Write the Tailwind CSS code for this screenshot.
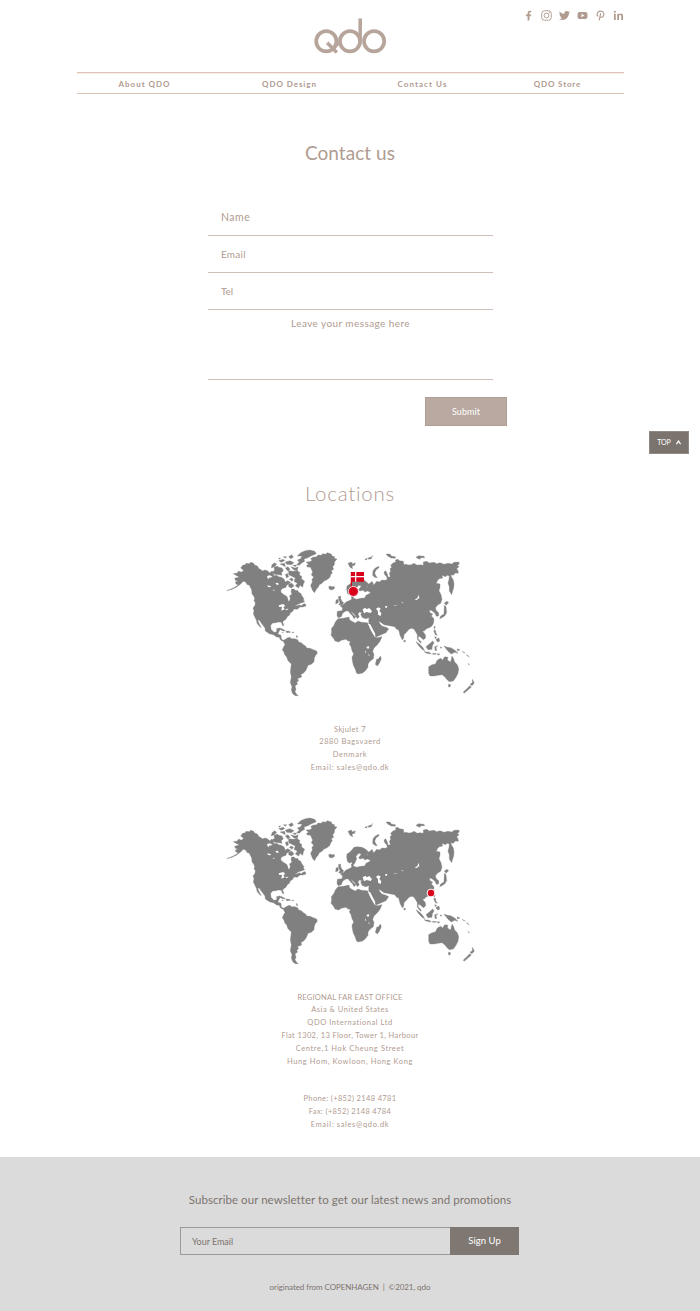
<!DOCTYPE html>
<html lang="en">
<head>
<meta charset="utf-8">
<meta name="viewport" content="width=device-width, initial-scale=1">
<title>QDO – Contact us</title>
<script src="https://cdn.jsdelivr.net/npm/@tailwindcss/browser@4"></script>
</head>
<body class="relative h-[1311px] w-[700px] overflow-x-hidden bg-white font-['Lato',sans-serif] text-[#b09b91]">

<!-- Shared world map, drawn at three units per pixel -->
<svg class="hidden" xmlns="http://www.w3.org/2000/svg">
  <symbol id="world" viewBox="0 0 780 480">
    <g fill="#808080" stroke="#808080" stroke-width="1" stroke-linejoin="round">
      <!-- North America -->
      <path d="M45,104L40,101L52,99L56,93L64,97L71,91L66,87L62,84L68,76L76,74L78,70L88,71L92,67L100,69L104,75L112,78L117,86L121,88L128,93L134,90L142,92L150,99L155,93L160,100L162,107L170,106L176,110L184,112L192,117L196,126L203,122L212,127L206,132L200,136L198,142L186,146L182,152L184,158L192,164L200,169L203,175L205,184L209,182L211,174L208,168L216,162L213,155L215,147L222,147L228,152L232,150L236,157L242,160L246,168L252,176L250,180L254,185L244,189L236,191L224,199L231,197L240,194L243,198L250,192L256,191L258,198L248,201L240,201L232,208L222,207L218,214L210,220L209,225L202,230L198,238L190,243L188,247L192,256L188,257L184,247L174,246L168,248L158,249L152,256L153,268L162,277L169,276L171,270L180,269L175,278L174,283L183,286L184,297L190,301L198,298L196,303L186,303L180,298L178,292L170,291L160,284L148,281L136,273L135,264L126,252L118,241L113,240L118,253L124,263L118,259L111,250L110,243L106,234L100,222L102,212L99,204L105,196L106,188L102,182L104,176L101,168L96,162L95,150L88,136L80,133L78,127L70,124L62,132L50,141L36,148L20,152L40,144L55,135L48,132L46,126L54,123L46,121L44,115L58,111L52,108z"/>
      <!-- Arctic archipelago -->
      <path d="M232,48L242,38L256,32L270,30L284,34L289,41L280,45L273,48L262,54L252,57L254,64L244,70L238,76L230,74L238,66L232,60L242,56L246,48z"/>
      <path d="M162,82L172,78L176,82L186,84L190,92L184,98L186,106L176,104L164,103L156,96L164,91z"/>
      <path d="M156,74L164,68L170,73L163,80L154,84zM176,62L190,58L194,62L184,67zM180,72L194,70L196,80L188,76zM196,66L210,62L222,68L214,74L200,73zM206,50L216,44L220,52L212,56zM190,50L200,50L196,55zM196,84L204,80L210,88L204,94zM212,80L226,84L234,80L232,92L222,90zM176,54L182,54L178,58zM218,76L230,75L226,80z"/>
      <path d="M206,92L220,94L232,92L240,98L238,104L246,110L244,116L254,124L250,132L248,142L240,136L236,144L226,138L232,130L222,124L226,114L214,108L206,104zM196,104L202,100L206,110L200,114zM206,132L216,130L222,138L214,144L206,140zM214,114L220,118L216,124L208,118z"/>
      <!-- Greenland and Iceland -->
      <path d="M258,66L270,65L276,61L272,56L278,52L290,50L294,45L304,46L308,41L316,43L322,38L334,42L336,48L344,50L342,55L351,57L344,65L343,74L338,80L341,88L334,92L337,99L332,104L330,112L320,120L312,123L306,130L298,134L295,141L288,149L284,158L278,152L275,145L272,136L277,126L276,118L281,112L274,104L278,96L274,88L272,82L262,81L260,76L266,73z"/>
      <path d="M326,140L332,138L336,141L342,139L344,145L336,150L328,148z"/>
      <!-- Caribbean -->
      <path d="M168,267L178,264L186,266L196,272L190,273L182,269L172,270zM198,273L208,274L212,277L200,278zM186,277L190,277L188,279zM216,276L222,277L218,279zM230,286L233,290L231,294L229,289z"/>
      <!-- South America -->
      <path d="M190,304L198,296L204,293L210,292L214,296L224,296L233,299L236,306L244,308L250,314L257,318L260,324L270,325L280,329L290,333L292,340L287,346L283,354L282,365L274,373L264,376L261,384L257,392L250,400L243,403L245,411L232,416L236,421L230,428L233,432L225,438L228,447L225,455L230,463L235,467L226,467L218,461L214,450L216,440L211,428L214,410L211,396L214,372L204,362L200,351L194,344L192,337L187,329L191,320L195,314z"/>
    </g>
    <g fill="#808080" stroke="#808080" stroke-width="1" stroke-linejoin="round" transform="translate(360 0)">
      <!-- Europe and Asia -->
      <path d="M-8,214L6,212L8,204L0,197L10,194L18,186L30,181L35,178L34,168L39,166L40,174L50,178L62,175L74,174L78,166L86,162L92,157L82,153L74,156L70,150L76,144L84,140L80,134L90,130L96,124L100,132L94,136L104,132L110,124L118,126L126,120L136,121L142,118L140,110L134,104L132,96L137,92L141,100L145,112L151,110L148,100L152,94L150,86L155,82L152,76L160,68L168,66L166,60L174,58L178,62L190,64L192,74L198,73L206,75L214,74L222,70L232,76L240,74L250,76L250,66L260,64L268,69L282,67L290,71L300,68L312,73L324,70L336,72L342,67L356,66L358,72L352,76L357,80L350,86L354,92L355,100L346,99L340,106L333,104L334,110L340,120L342,132L341,144L337,156L335,164L328,153L328,140L324,130L327,118L328,108L322,106L316,110L306,106L308,114L298,116L292,122L289,130L300,132L300,142L297,152L303,164L306,178L302,190L292,196L286,204L289,212L296,218L296,228L289,229L285,220L276,212L268,210L270,218L278,222L274,228L282,236L281,248L276,258L268,263L258,266L254,272L248,274L256,284L257,294L250,299L242,292L236,288L234,296L244,306L242,310L232,298L232,284L226,274L222,268L216,265L208,267L200,276L192,284L191,294L187,300L180,286L176,270L170,268L164,260L148,257L132,254L124,248L116,243L120,252L126,258L132,260L138,262L146,266L138,278L124,284L108,291L103,281L95,268L87,254L86,240L88,233L76,236L66,232L62,222L66,218L58,216L54,222L58,230L52,236L46,226L38,218L32,214L40,224L48,230L42,236L38,228L30,220L24,212L16,214L8,220L4,230L-6,233L-9,226z"/>
      <!-- Scandinavia -->
      <path d="M20,147L21,138L30,132L36,125L42,118L52,116L66,118L75,122L84,130L82,140L72,150L60,153L56,149L64,138L56,136L48,145L50,152L45,164L40,171L35,163L28,165L22,160z"/>
      <!-- British Isles -->
      <path d="M-5,170L2,168L2,176L6,184L11,188L8,194L-4,195L0,188L-3,180zM-12,180L-5,178L-5,188L-13,192z"/>
      <!-- Africa -->
      <path d="M-6,236L10,235L27,231L29,240L38,245L46,249L54,243L64,247L82,248L86,254L90,266L98,280L105,291L112,293L126,290L120,304L112,314L102,324L98,334L102,344L100,356L90,364L84,372L84,382L76,392L68,399L54,402L49,398L46,388L40,376L37,362L36,352L41,342L36,332L33,320L28,312L31,304L24,303L18,298L4,301L-4,306L-15,303L-20,294L-27,286L-25,276L-26,266L-18,256L-14,246z"/>
      <path d="M121,348L124,356L118,370L112,378L106,373L110,358L116,356z"/>
      <!-- Arctic islands -->
      <path d="M24,70L34,66L38,72L46,68L44,76L36,78L38,86L30,82zM74,58L82,55L80,60zM84,54L96,50L98,46L94,56L86,58zM98,106L99,92L106,84L116,79L117,83L108,90L104,100L108,108L112,113L104,112zM138,42L150,42L154,48L166,50L166,55L154,54L144,49zM228,52L236,47L252,49L254,53L242,53L240,58L232,55z"/>
      <!-- Japan, Sakhalin -->
      <path d="M313,189L321,184L326,188L318,196zM313,196L318,200L320,218L314,228L304,234L299,236L302,228L312,222zM330,112L334,120L334,134L331,128z"/>
      <!-- Southeast Asia and Pacific -->
      <path d="M192,300L197,302L195,307L191,304zM228,305L238,312L248,322L254,332L246,328L236,317zM252,335L268,337L274,342L260,340zM278,340L290,341L288,343L278,343zM292,341L300,342L294,346zM258,320L268,312L278,303L282,308L277,317L276,328L264,329zM284,320L294,317L288,322L290,332L285,331zM282,259L286,260L283,268zM281,272L286,270L288,280L292,286L286,284zM288,298L297,294L299,304L292,306zM284,290L290,292L286,296zM301,320L306,323L302,325zM312,318L322,322L332,323L344,330L354,340L344,337L334,342L324,334zM352,326L360,330L352,333zM366,334L376,339L370,337zM380,344L388,350L382,348zM384,370L389,375L385,373zM256,264L262,262L258,268z"/>
      <!-- Australia, Tasmania, New Zealand -->
      <path d="M266,380L276,374L286,372L292,360L302,355L308,360L314,350L324,352L322,360L332,366L336,348L341,356L344,366L352,374L356,386L354,400L348,412L340,423L328,425L320,418L314,410L306,404L294,406L282,408L270,408L266,400zM325,433L332,434L330,441L326,441zM397,418L403,429L396,437L390,433L397,428zM389,437L394,441L384,450L372,460L370,456L380,447z"/>
    </g>
    <!-- Lakes and inland seas -->
    <g fill="#fff">
      <path d="M141,108L150,106L158,111L148,113L144,118zM142,136L154,139L150,142L144,141zM166,130L174,128L176,134L170,134zM158,150L164,149L162,153zM176,196L190,192L196,198L190,201L194,208L184,212L186,200L178,201zM196,207L206,206L200,211z"/>
      <g transform="translate(360 0)">
        <path d="M68,208L76,203L80,208L88,204L96,214L92,219L80,216L72,220zM108,206L116,202L122,206L118,212L124,220L122,228L114,224L114,214zM136,198L142,198L140,204L136,203zM160,198L174,194L166,198zM184,188L190,186L188,190zM224,180L232,174L236,164L238,174L230,180zM80,320L88,319L86,326L80,325zM76,330L79,338L76,338zM86,340L89,348L86,347z"/>
        <path d="M84,252L90,252L106,282L104,290L96,276z"/>
      </g>
    </g>
  </symbol>
</svg>

<header class="mx-auto w-[547px]">
  <div class="grid h-[72px] grid-cols-[1fr_76px_1fr]">
    <span></span>
    <svg class="mt-[17px] h-[40px] w-[76px]" viewBox="0 0 76 40" fill="none" stroke="#b7a59b" stroke-width="3.7" role="img" aria-label="qdo">
      <circle cx="14.3" cy="24.3" r="10.1"/><circle cx="38" cy="24.3" r="10.1"/><circle cx="62.1" cy="24.3" r="10.1"/>
      <path d="M15.2 25.8L24.8 35.4M26.5 26L20 32.5M48.2 1.5V25" stroke-width="3.5"/>
    </svg>
    <div class="flex h-[30px] items-center justify-end gap-[7px] text-[#b09b91]">
      <svg class="size-[11px]" viewBox="0 0 12 12" fill="currentColor"><path d="M5 11.5V6.8H3.2V4.9H5V3.4C5 1.6 6 .7 7.6 .7L9 .8V2.5H8C7.2 2.5 7 2.9 7 3.5V4.9H8.9L8.6 6.8H7V11.5z"/></svg>
      <svg class="size-[11px]" viewBox="0 0 12 12" fill="none" stroke="currentColor"><rect x=".8" y=".8" width="10.4" height="10.4" rx="3"/><circle cx="6" cy="6" r="2.6"/><circle cx="9" cy="3" r=".3"/></svg>
      <svg class="size-[11px]" viewBox="0 0 24 24" fill="currentColor"><path d="M23.95 4.57a10 10 0 01-2.82.77 4.96 4.96 0 002.16-2.72c-.95.55-2 .96-3.13 1.18a4.92 4.92 0 00-8.38 4.48C7.69 8.1 4.07 6.13 1.64 3.16a4.92 4.92 0 001.52 6.57 4.9 4.9 0 01-2.23-.61v.06a4.92 4.92 0 003.95 4.83 5 5 0 01-2.21.08 4.94 4.94 0 004.6 3.42A9.87 9.87 0 010 19.54a14 14 0 007.55 2.21c9.05 0 14-7.5 14-13.98 0-.21 0-.42-.02-.63a9.94 9.94 0 002.42-2.57z"/></svg>
      <svg class="size-[11px]" viewBox="0 0 12 12" fill="currentColor"><path fill-rule="evenodd" d="M2.8 2.2H9.2Q11.4 2.2 11.4 4.2V7.8Q11.4 9.8 9.2 9.8H2.8Q.6 9.8 .6 7.8V4.2Q.6 2.2 2.8 2.2zM4.9 4.2V7.8L8 6z"/></svg>
      <svg class="size-[11px]" viewBox="0 0 12 12" fill="none" stroke="currentColor" stroke-width="1.2" stroke-linecap="round"><path d="M3.2 6.7C1.3 4.5 2.8 1.2 6.2 1.2C9.3 1.2 10.3 3.8 9.4 6C8.6 8.2 6.2 8.4 5.4 7.1M6.2 3.9L4.5 11"/></svg>
      <svg class="size-[11px]" viewBox="0 0 12 12" fill="currentColor"><circle cx="2" cy="1.9" r="1.2"/><path d="M1 4H3V11H1zM4.6 4H6.5V5C7.6 3.3 11 3.4 11 6.7V11H9V7.2C9 5 6.6 5.1 6.6 7.2V11H4.6z"/></svg>
    </div>
  </div>
  <nav class="flex h-[22px] items-center border-y border-[#dcc4b6] pt-[2px] pl-[28px] text-[8px] font-bold leading-none whitespace-nowrap text-[#b09b91] shadow-[inset_0_0.5px_0_#eadbd1]">
    <a class="w-20 text-center tracking-[0.98px]">About QDO</a>
    <a class="ml-[65px] w-20 text-center tracking-[0.94px]">QDO Design</a>
    <a class="ml-[53px] w-20 text-center tracking-[1.07px]">Contact Us</a>
    <a class="ml-[55px] w-20 text-center tracking-[0.83px]">QDO Store</a>
  </nav>
</header>

<main>
  <h1 class="mt-[47px] text-center text-[19px] leading-6 tracking-[0.05px]">Contact us</h1>

  <form class="ml-[208px] mt-[34px] w-[285px] text-[10px] leading-none">
    <div class="flex h-[37px] items-center border-b border-[#cfc1ba] pl-[13px] text-[10.5px] tracking-[0.5px]">Name</div>
    <div class="flex h-[37px] items-center border-b border-[#cfc1ba] pl-[13px] tracking-[0.23px]">Email</div>
    <div class="flex h-[37px] items-center border-b border-[#cfc1ba] pl-[13px] tracking-[-0.16px]">Tel</div>
    <div class="h-[70px] border-b border-[#cfc1ba] pt-[8px] text-center tracking-[0.41px]">Leave your message here</div>
    <button type="button" class="ml-[217px] mt-[16.5px] flex h-[29px] w-[82px] items-center justify-center border border-[#b09e94] bg-[#b9a9a1] text-[9px] tracking-[0.07px] text-white">Submit</button>
  </form>

  <h2 class="mt-[55.5px] text-center text-[20.5px] font-light leading-6 tracking-[0.75px]">Locations</h2>

  <div class="relative ml-[220px] mt-[35px] h-[160px] w-[260px]">
    <svg class="size-full" viewBox="0 0 780 480"><use href="#world" width="780" height="480"/></svg>
    <svg class="absolute left-[124px] top-[30px] h-[30px] w-[22px]" viewBox="0 0 22 30"><path d="M6.8 2H20V11.7H8V20H6.8z" fill="#d9001b"/><path d="M11.7 2V11.7M7 6.7H20" stroke="#fff" stroke-width="1.2"/><circle cx="9.4" cy="21.4" r="5" fill="#d9001b" stroke="#fff" stroke-width=".8"/></svg>
  </div>

  <address class="mt-[23.6px] text-center text-[7.5px] leading-[12.8px] not-italic">
    <p class="tracking-[0.38px]">Skjulet 7</p>
    <p class="tracking-[0.6px]">2880 Bagsvaerd</p>
    <p class="tracking-[0.63px]">Denmark</p>
    <p class="tracking-[0.66px]">Email: sales@qdo.dk</p>
  </address>

  <div class="relative ml-[220px] mt-[33.2px] h-[160px] w-[260px]">
    <svg class="size-full" viewBox="0 0 780 480"><use href="#world" width="780" height="480"/></svg>
    <svg class="absolute left-[206px] top-[80px] size-[10px]" viewBox="0 0 10 10"><circle cx="5" cy="5" r="3.9" fill="#d9001b" stroke="#fff"/></svg>
  </div>

  <address class="mt-[23.6px] text-center text-[7.5px] leading-[12.8px] not-italic">
    <p class="tracking-[0.22px]">REGIONAL FAR EAST OFFICE</p>
    <p class="tracking-[0.51px]">Asia &amp; United States</p>
    <p class="tracking-[0.55px]">QDO International Ltd</p>
    <p class="tracking-[0.37px]">Flat 1302, 13 Floor, Tower 1, Harbour</p>
    <p class="tracking-[0.6px]">Centre,1 Hok Cheung Street</p>
    <p class="tracking-[0.6px]">Hung Hom, Kowloon, Hong Kong</p>
    <p class="mt-[24.6px] tracking-[0.35px]">Phone: (+852) 2148 4781</p>
    <p class="tracking-[0.35px]">Fax: (+852) 2148 4784</p>
    <p class="tracking-[0.66px]">Email: sales@qdo.dk</p>
  </address>
</main>

<footer class="mt-[25.4px] h-[154px] bg-[#dbdbdb] pt-[35px] text-center text-[#7b746f]">
  <p class="text-[11.5px] leading-4 tracking-[0.05px]">Subscribe our newsletter to get our latest news and promotions</p>
  <form class="ml-[180px] mt-[19px] flex h-[28px] w-[339px] leading-none">
    <div class="flex w-[270px] items-center border border-r-0 border-[#9b9896] pt-px pl-[11px] text-[9px] tracking-[-0.04px]">Your Email</div>
    <button type="button" class="flex-1 bg-[#7f7872] text-[9.5px] tracking-[0.04px] text-white">Sign Up</button>
  </form>
  <p class="mt-[26px] text-[8px] leading-3 tracking-[-0.08px] whitespace-pre">originated from COPENHAGEN  |  ©2021, qdo</p>
</footer>

<a class="absolute left-[649px] top-[431px] flex h-[23px] w-[40px] items-center justify-center gap-[5px] border border-[#928b85] bg-[#7b746e] text-[7px] leading-none tracking-[-0.1px] text-white">TOP
  <svg class="h-[5px] w-[5px]" viewBox="0 0 5 5" fill="none" stroke="#fff" stroke-width="1.2"><path d="M.5 4.2L2.5 1L4.5 4.2"/></svg>
</a>
</body>
</html>
